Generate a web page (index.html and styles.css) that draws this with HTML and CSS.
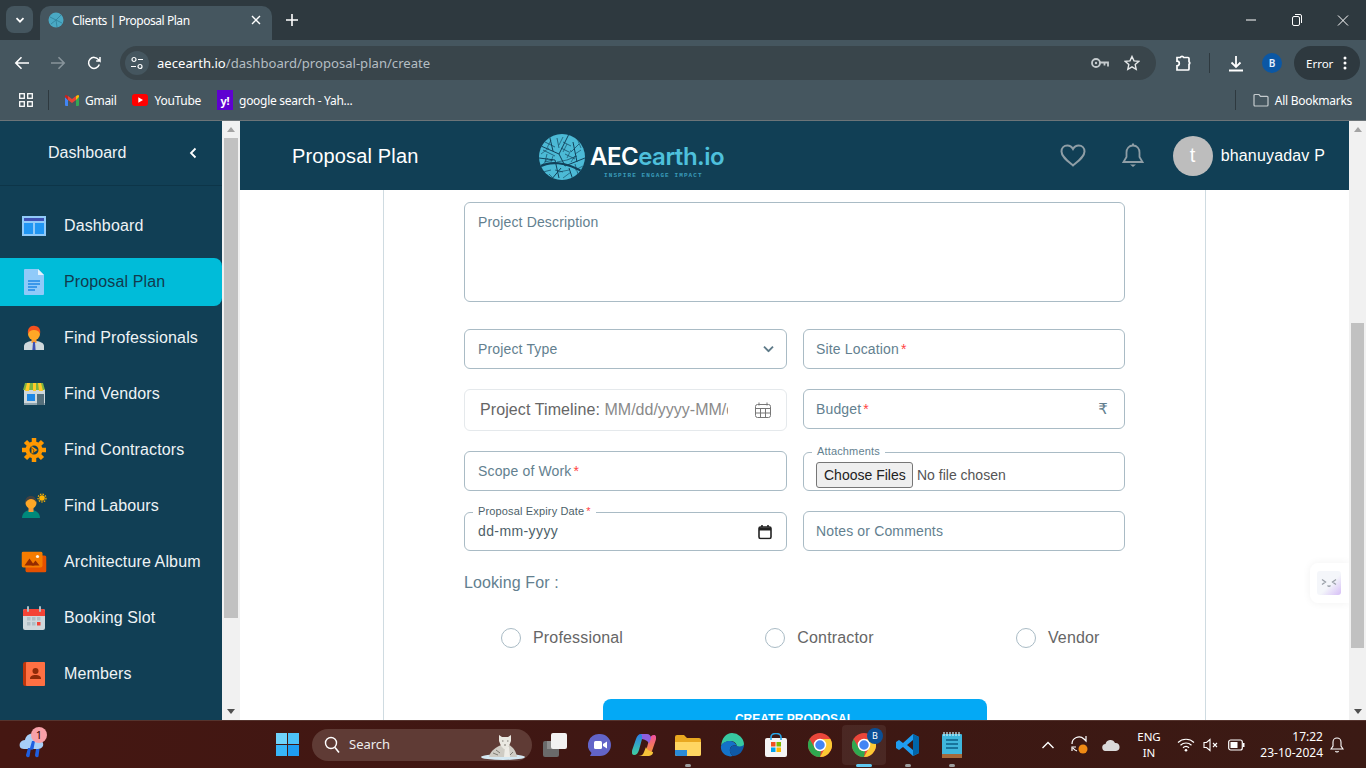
FILE: index.html
```html
<!DOCTYPE html>
<html>
<head>
    <title>Clients | Proposal Plan</title>
    <link rel="stylesheet" href="styles.css">
</head>
<body>
    <!-- Browser chrome -->
    <div class="tabbar">
        <div class="tab-search"><svg width="12" height="12" viewBox="0 0 12 12"><path d="M2.5 4.2 6 7.7l3.5-3.5" fill="none" stroke="#fff" stroke-width="1.7"/></svg></div>
        <div class="tab">
            <svg class="favicon" width="16" height="16" viewBox="0 0 16 16"><circle cx="8" cy="8" r="7.5" fill="#4aa9c4"/><path d="M2 5l6 3 5-5M3 12l5-4 1 7M8 8l6 3" stroke="#2f7f99" fill="none" stroke-width=".8"/></svg>
            <span class="tab-title">Clients | Proposal Plan</span>
            <svg class="tab-close" width="10" height="10" viewBox="0 0 10 10"><path d="M1 1l8 8M9 1L1 9" stroke="#fff" stroke-width="1.4"/></svg>
        </div>
        <svg class="tab-new" width="12" height="12" viewBox="0 0 12 12"><path d="M6 0v12M0 6h12" stroke="#fff" stroke-width="1.6"/></svg>
        <div class="win-controls">
            <svg width="10" height="10" viewBox="0 0 10 10"><path d="M0 5h10" stroke="#fff"/></svg>
            <svg width="10" height="12" viewBox="0 0 10 12"><rect x=".5" y="2.5" width="7" height="9" rx="1.5" fill="none" stroke="#fff"/><path d="M3 .5h5a1.500 1.500 0 0 1 1.500 1.500v7" fill="none" stroke="#fff"/></svg>
            <svg width="11" height="11" viewBox="0 0 11 11"><path d="M.5.5l10 10M10.500.5l-10 10" stroke="#fff"/></svg>
        </div>
    </div>

    <div class="toolbar">
        <svg class="tool-back" width="16" height="14" viewBox="0 0 16 14"><path d="M15 7H2M7.500 1.200 1.800 7l5.700 5.800" fill="none" stroke="#fff" stroke-width="1.600"/></svg>
        <svg class="tool-forward" width="16" height="14" viewBox="0 0 16 14"><path d="M1 7h13M8.500 1.200 14.200 7l-5.700 5.800" fill="none" stroke="#88949b" stroke-width="1.600"/></svg>
        <svg class="tool-reload" width="14" height="14" viewBox="0 0 14 14"><path d="M12.300 8.600a5.500 5.500 0 1 1-.8-5L13 5V1M13 5H9.200" fill="none" stroke="#fff" stroke-width="1.500"/></svg>
        <div class="omnibox">
            <div class="site-info"><svg width="14" height="14" viewBox="0 0 14 14"><circle cx="4" cy="3.500" r="2" fill="none" stroke="#fff" stroke-width="1.200"/><path d="M8 3.500h5M1 10.500h5" stroke="#fff" stroke-width="1.200"/><circle cx="10" cy="10.500" r="2" fill="none" stroke="#fff" stroke-width="1.200"/></svg></div>
            <div class="url"><span class="url-host">aecearth.io</span>/dashboard/proposal-plan/create</div>
            <svg class="omni-key" width="18" height="12" viewBox="0 0 18 12"><circle cx="5" cy="6" r="4" fill="none" stroke="#c5cbce" stroke-width="1.800"/><circle cx="5" cy="6" r="1.200" fill="#c5cbce"/><path d="M9 5.500h8v4M13.500 5.500v3" fill="none" stroke="#c5cbce" stroke-width="1.800"/></svg>
            <svg class="omni-star" width="16" height="16" viewBox="0 0 16 16"><path d="M8 1.500l2 4.400 4.700.5-3.500 3.200 1 4.700L8 11.900l-4.200 2.400 1-4.700L1.300 6.400 6 5.900z" fill="none" stroke="#e6e9ea" stroke-width="1.400"/></svg>
        </div>
        <svg class="tool-ext" width="18" height="18" viewBox="0 0 18 18"><path d="M3 3.500h3.200a2 2 0 0 1 3.600 0H14a1 1 0 0 1 1 1v3.200a1.500 1.500 0 0 1 0 2.600V15a1 1 0 0 1-1 1H3v-4.200a2.300 2.300 0 0 0 0-4.600z" fill="none" stroke="#fff" stroke-width="1.700"/></svg>
        <span class="tool-divider"></span>
        <svg class="tool-download" width="16" height="17" viewBox="0 0 16 17"><path d="M8 1v11M3.500 7.500 8 12l4.500-4.500M1 15.500h14" fill="none" stroke="#fff" stroke-width="1.800"/></svg>
        <span class="tool-profile">B</span>
        <div class="tool-error">Error<svg width="4" height="14" viewBox="0 0 4 14"><circle cx="2" cy="2" r="1.500" fill="#fff"/><circle cx="2" cy="7" r="1.500" fill="#fff"/><circle cx="2" cy="12" r="1.500" fill="#fff"/></svg></div>
    </div>

    <div class="bookmarks">
        <svg class="mark-apps" width="14" height="14" viewBox="0 0 14 14"><g fill="none" stroke="#fff" stroke-width="1.300"><rect x=".7" y=".7" width="4.600" height="4.600"/><rect x="8.700" y=".7" width="4.600" height="4.600"/><rect x=".7" y="8.700" width="4.600" height="4.600"/><rect x="8.700" y="8.700" width="4.600" height="4.600"/></g></svg>
        <span class="mark-divider"></span>
        <div class="mark mark-gmail"><svg width="14" height="11" viewBox="0 0 14 11"><path d="M0 2v8a1 1 0 0 0 1 1h2V5z" fill="#4285f4"/><path d="M14 2v8a1 1 0 0 1-1 1h-2V5z" fill="#34a853"/><path d="M0 2l3 3v-4L1.500.2C.8-.2 0 .5 0 1.300z" fill="#c5221f"/><path d="M14 2l-3 3v-4l1.500-.8c.7-.4 1.500.3 1.500 1.100z" fill="#fbbc04"/><path d="M3 1v4l4 3 4-3V1L7 4z" fill="#ea4335"/></svg>Gmail</div>
        <div class="mark mark-youtube"><svg width="16" height="12" viewBox="0 0 16 12"><rect width="16" height="12" rx="3" fill="#f00"/><path d="M6.300 3.300v5.400L11 6z" fill="#fff"/></svg>YouTube</div>
        <div class="mark mark-yahoo"><span class="yahoo-icon">y!</span>google search - Yah...</div>
        <span class="mark-divider mark-divider-end"></span>
        <div class="mark mark-all"><svg width="16" height="14" viewBox="0 0 16 14"><path d="M1 2.500a1 1 0 0 1 1-1h4l1.500 1.800H14a1 1 0 0 1 1 1V12a1 1 0 0 1-1 1H2a1 1 0 0 1-1-1z" fill="none" stroke="#c5cbce" stroke-width="1.200"/></svg>All Bookmarks</div>
    </div>

    <!-- App -->
    <div class="app">
        <aside class="sidebar">
            <div class="side-head">
                <span>Dashboard</span>
                <svg width="10" height="12" viewBox="0 0 10 12"><path d="M7.500 1.500 3 6l4.500 4.500" fill="none" stroke="#fff" stroke-width="1.800"/></svg>
            </div>
            <nav class="side-nav">
                <a class="side-item">
                    <svg width="24" height="24" viewBox="0 0 24 24"><rect y="2" width="24" height="20" fill="#90caf9"/><rect x="2" y="4" width="20" height="3" fill="#3f51b5"/><rect x="2" y="9" width="9" height="11" fill="#2196f3"/><rect x="13" y="9" width="9" height="11" fill="#2196f3"/></svg>
                    Dashboard</a>
                <a class="side-item active">
                    <svg width="24" height="26" viewBox="0 0 24 26"><path d="M3 0h13l6 6v19a1 1 0 0 1-1 1H3a1 1 0 0 1-1-1V1a1 1 0 0 1 1-1z" fill="#90caf9"/><path d="M16 0l6 6h-6z" fill="#e3f2fd"/><path d="M6 12h12M6 15h12M6 18h9M6 21h7" stroke="#1e88e5" stroke-width="1.500"/></svg>
                    Proposal Plan</a>
                <a class="side-item">
                    <svg width="24" height="26" viewBox="0 0 24 26"><path d="M2 25v-4c0-3 4-5 10-5s10 2 10 5v4z" fill="#cfd8dc"/><rect x="9.500" y="12" width="5" height="6" fill="#f59b3b"/><circle cx="12" cy="9" r="6" fill="#ffa726"/><path d="M6 9C5 3 9 0 13 1c4 0 6 4 5 8-1-3-3-4-6-4-3 0-5 1-6 4z" fill="#f4511e"/><path d="M11 17h2l.6 8h-3.200z" fill="#3f51b5"/></svg>
                    Find Professionals</a>
                <a class="side-item">
                    <svg width="24" height="24" viewBox="0 0 24 24"><rect x="2" y="7" width="21" height="16" fill="#cfd8dc"/><rect x="2" y="21" width="21" height="2" fill="#90a4ae"/><rect x="5" y="12" width="8" height="7" fill="#1e88e5"/><rect x="15" y="12" width="7" height="11" fill="#546e7a"/><path d="M3 1h18l2 7H1z" fill="#7cb342"/><path d="M5 1h3L7 9H3zM11 1h3v8h-3zM16 1h3l2 8h-4z" fill="#ffca28"/></svg>
                    Find Vendors</a>
                <a class="side-item">
                    <svg width="24" height="24" viewBox="0 0 24 24"><path d="M12 5.500a6.500 6.500 0 1 1 0 13 6.500 6.500 0 0 1 0-13z" fill="none" stroke="#ff9800" stroke-width="4"/><g stroke="#ff9800" stroke-width="4.500"><path d="M12 0v4M12 20v4M0 12h4M20 12h4M3.500 3.500l3 3M17.500 17.500l3 3M3.500 20.500l3-3M17.500 6.500l3-3"/></g><path d="M9.500 8l6 4-6 4z" fill="#ff9800"/><path d="M12 12L8 9M12 12l-1 4" stroke="#8d5300" stroke-width="1"/></svg>
                    Find Contractors</a>
                <a class="side-item">
                    <svg width="26" height="26" viewBox="0 0 26 26"><path d="M1 25c0-5 4-8 9-8s9 3 9 8z" fill="#00897b"/><rect x="7.500" y="13" width="5" height="6" fill="#f59b3b"/><circle cx="10" cy="10" r="5.500" fill="#ffa726"/><path d="M4.500 10c-1-5 3-7.500 6-7 3 0 5 3 4.500 6-1-2-3-3-5-3-2 0-4 1-5.500 4z" fill="#424242"/><circle cx="21" cy="5" r="2.800" fill="#ffb300"/><circle cx="21" cy="5" r="4" fill="none" stroke="#ffb300" stroke-width="1.200" stroke-dasharray="1.500 1.200"/></svg>
                    Find Labours</a>
                <a class="side-item">
                    <svg width="25" height="21" viewBox="0 0 25 21"><rect x="4" y="4" width="21" height="17" rx="2" fill="#e65100"/><rect width="21" height="16" rx="2" fill="#f57c00"/><path d="M3 14l5-7 5 7z" fill="#942b00"/><path d="M10 14l4-5 4 5z" fill="#942b00"/><circle cx="16" cy="5" r="1.600" fill="#fff3e0"/></svg>
                    Architecture Album</a>
                <a class="side-item">
                    <svg width="24" height="24" viewBox="0 0 24 24"><rect x="1" y="3" width="22" height="21" rx="2" fill="#cfd8dc"/><path d="M1 10V5a2 2 0 0 1 2-2h18a2 2 0 0 1 2 2v5z" fill="#f44336"/><rect x="5" y="0" width="2" height="6" rx="1" fill="#b0bec5"/><rect x="17" y="0" width="2" height="6" rx="1" fill="#b0bec5"/><g fill="#b0bec5"><rect x="5" y="11" width="3.500" height="3.500"/><rect x="10" y="11" width="3.500" height="3.500"/><rect x="15" y="11" width="3.500" height="3.500"/><rect x="5" y="16" width="3.500" height="3.500"/><rect x="10" y="16" width="3.500" height="3.500"/></g><rect x="15" y="16" width="3.500" height="3.500" fill="#f44336"/></svg>
                    Booking Slot</a>
                <a class="side-item">
                    <svg width="22" height="24" viewBox="0 0 22 24"><rect width="22" height="24" rx="2" fill="#bf360c"/><rect x="3" width="19" height="24" rx="1" fill="#ff7043"/><circle cx="12.500" cy="9" r="3" fill="#8f2a08"/><path d="M7 17c0-3 2-4 5.500-4s5.500 1 5.500 4z" fill="#8f2a08"/></svg>
                    Members</a>
            </nav>
        </aside>
        <div class="scrollbar scrollbar-side"><span class="sb-up"></span><span class="sb-thumb"></span><span class="sb-down"></span></div>

        <main class="main">
            <header class="top-bar">
                <h1 class="page-title">Proposal Plan</h1>
                <div class="logo">
                    <svg width="46" height="46" viewBox="0 0 46 46">
                        <defs><clipPath id="globe"><circle cx="23" cy="23" r="23"/></clipPath></defs>
                        <circle cx="23" cy="23" r="23" fill="#4cbad6"/>
                        <g clip-path="url(#globe)" fill="none" stroke="#12415a">
                            <path d="M0 33c10-6 26-6 46 6" stroke-width="2.200"/>
                            <path d="M2 12l18 8 6 12M20 20L30 0M26 32l20-8M10 0l4 17M0 24l16 2 4 18M34 8l4 20M12 46l10-12M30 34l4 12" stroke-width="1"/>
                            <path d="M4 16l12 6M6 8l10 5M24 8l8 4M22 14l8 4M26 20l10 5M28 26l10-4M6 28l8-2M8 20l-2 8M36 30l4 14M18 4l2 10M40 10l-8 8M16 36l8 2M4 38l8-2" stroke-width=".7"/>
                            <path d="M2 20l8-6M12 6l-4 8M14 22l-2 6M3 32l6-8M24 3l-4 8M28 10l-4 8M32 16l-4 8M36 22l-4 6M42 16l-6 4M38 4l4 10M18 28l10-2M20 38l10-2M24 44l8-6M36 36l8-4M10 40l4 4" stroke-width=".6"/>
                        </g>
                    </svg>
                    <div class="logo-text">
                        <div class="logo-name">AEC<span>earth.io</span></div>
                        <div class="logo-tag">INSPIRE ENGAGE IMPACT</div>
                    </div>
                </div>
                <div class="top-actions">
                    <svg class="top-heart" width="26" height="23" viewBox="0 0 26 23"><path d="M13 21.500C7 16.500 1.500 12.500 1.500 7.500 1.500 4 4 1.500 7.300 1.500c2.400 0 4.500 1.300 5.700 3.500 1.200-2.200 3.300-3.500 5.700-3.500 3.300 0 5.800 2.500 5.800 6 0 5-5.500 9-11.500 14z" fill="none" stroke="#8f9ea6" stroke-width="2"/></svg>
                    <svg class="top-bell" width="22" height="25" viewBox="0 0 22 25"><path d="M11 2.500c-4 0-6.500 3-6.500 7v4.500L1.500 19h19l-3-5V9.500c0-4-2.500-7-6.500-7z" fill="none" stroke="#8f9ea6" stroke-width="1.800"/><path d="M11 .5v2" stroke="#8f9ea6" stroke-width="2"/><path d="M8 21.500h6l-3 2.500z" fill="#8f9ea6"/></svg>
                    <span class="avatar">t</span>
                    <span class="user-name">bhanuyadav P</span>
                </div>
            </header>

            <div class="content">
                <form class="card">
                    <div class="field field-area">Project Description</div>
                    <div class="form-grid">
                        <div class="field">Project Type
                            <svg class="field-icon icon-chevron" width="11" height="7" viewBox="0 0 11 7"><path d="M1 1.200l4.500 4.500L10 1.200" fill="none" stroke="#5e7a88" stroke-width="1.900"/></svg>
                        </div>
                        <div class="field">Site Location<span class="req">*</span></div>
                        <div class="field field-timeline">
                            <span class="timeline-label">Project Timeline:&nbsp;</span><span class="timeline-value">MM/dd/yyyy-MM/dd/yyyy</span>
                            <svg class="field-icon" width="16" height="16" viewBox="0 0 16 16"><g fill="none" stroke="#777" stroke-width="1"><rect x=".5" y="2.500" width="15" height="13" rx="2"/><path d="M4 .5v3M12 .5v3M.5 6.500h15M5.500 6.500v9M10.500 6.500v9M.5 11h15"/></g></svg>
                        </div>
                        <div class="field">Budget<span class="req">*</span><span class="field-icon rupee">₹</span></div>
                        <div class="field">Scope of Work<span class="req">*</span></div>
                        <div class="field field-float">
                            <span class="float-label">Attachments</span>
                            <input class="file-input" type="file" multiple>
                        </div>
                        <div class="field field-float field-date">
                            <span class="float-label">Proposal Expiry Date<span class="req">*</span></span>
                            dd-mm-yyyy
                            <svg class="field-icon icon-date" width="14" height="15" viewBox="0 0 14 15"><rect x="1" y="2.500" width="12" height="11.500" rx="1.500" fill="none" stroke="#222" stroke-width="1.600"/><path d="M1 4.500h12" stroke="#222" stroke-width="3"/><path d="M4 .5v2M10 .5v2" stroke="#222" stroke-width="1.600"/></svg>
                        </div>
                        <div class="field">Notes or Comments</div>
                    </div>
                    <div class="looking-title">Looking For :</div>
                    <div class="looking-row">
                        <label class="radio"><span class="radio-dot"></span>Professional</label>
                        <label class="radio"><span class="radio-dot"></span>Contractor</label>
                        <label class="radio"><span class="radio-dot"></span>Vendor</label>
                    </div>
                    <button class="create-btn" type="button">CREATE PROPOSAL</button>
                </form>
            </div>

            <div class="float-widget">
                <div class="float-widget-icon"><svg width="16" height="10" viewBox="0 0 16 10"><path d="M1 1.500l3.500 2.500L1 6.500M15 1.500L11.500 4 15 6.500M6.500 7.500q1.500 1.500 3 0" fill="none" stroke="#9aa0a8" stroke-width="1.300"/></svg></div>
            </div>
        </main>
        <div class="scrollbar scrollbar-main"><span class="sb-up"></span><span class="sb-track"></span><span class="sb-thumb"></span><span class="sb-down"></span></div>
    </div>

    <!-- Windows taskbar -->
    <footer class="taskbar">
        <div class="task-weather">
            <svg width="26" height="28" viewBox="0 0 26 28"><path d="M5 18c-4 0-5-3-4-6 1-2 3-3 5-3 1-5 5-7 8-6 3 0 5 3 5 6 4 0 6 3 5 6-1 2-3 3-5 3z" fill="#a8cff7"/><path d="M9 17l-2 7a2 2 0 0 0 3.500 1.500L12 17zM13 10l-2 7a2 2 0 0 0 3.500 1L16 10zM17 18l-1 6a2 2 0 0 0 3.500 1.500l1-7.500z" fill="#1f5fe0"/></svg>
            <span class="weather-badge">1</span>
        </div>
        <div class="task-slot task-start">
            <svg width="23" height="23" viewBox="0 0 23 23"><rect width="11" height="11" fill="#6fd3fb"/><rect x="12" width="11" height="11" fill="#4cc2f9"/><rect y="12" width="11" height="11" fill="#38b5f8"/><rect x="12" y="12" width="11" height="11" fill="#1e9df2"/></svg>
        </div>
        <div class="task-search">
            <svg width="16" height="18" viewBox="0 0 16 18"><circle cx="7" cy="7" r="5.500" fill="none" stroke="#fff" stroke-width="1.400"/><path d="M11 11.500l4 5" stroke="#fff" stroke-width="1.600"/></svg>
            <span>Search</span>
            <svg class="search-tiger" width="44" height="26" viewBox="0 0 44 26"><ellipse cx="22" cy="23" rx="22" ry="3" fill="#d5e8f2"/><path d="M8 23c1-6 8-11 13-12h7c4 2 7 6 8 12z" fill="#cfccc4"/><path d="M24 13h4l1 10h-6z" fill="#eeece6"/><path d="M18 1l3 2h6l3-2 0 6-2 5-3 3h-2l-3-3-2-5z" fill="#ebe9e2"/><path d="M21 7h1.500M26 7h1.500M24 10v2M12 19l5 2M15 16l4 3M32 18l-3 3" stroke="#7f7d75" stroke-width="1"/></svg>
        </div>
        <div class="task-slot"><svg width="26" height="24" viewBox="0 0 26 24"><rect y="8" width="16" height="16" rx="2" fill="#6a6a6a"/><rect x="4" y="8" width="12" height="8" fill="#8c8c8c"/><rect x="8" width="16" height="16" rx="2" fill="#f2f2f2"/></svg></div>
        <div class="task-slot"><svg width="24" height="24" viewBox="0 0 24 24"><path d="M12 1a11 11 0 0 1 0 22H2l1.500-3A11 11 0 0 1 12 1z" fill="#6264c8"/><rect x="6" y="8" width="8" height="8" rx="1.500" fill="#fff"/><path d="M15 11l4-2.500v7L15 13z" fill="#fff"/></svg></div>
        <div class="task-slot"><svg width="24" height="24" viewBox="0 0 24 24"><defs><linearGradient id="cop-a" x1="0" y1="0" x2="0" y2="1"><stop offset="0" stop-color="#2a7fe8"/><stop offset="1" stop-color="#3fd0a0"/></linearGradient><linearGradient id="cop-b" x1="0" y1="0" x2="0" y2="1"><stop offset="0" stop-color="#f04fa0"/><stop offset="1" stop-color="#f6a020"/></linearGradient></defs><path d="M9 1h6c-3 0-4 2-5 5L7 17c-.8 3-2.500 5-5 5-2 0-2.500-2-1.800-5L4 6c1-3 2.500-5 5-5z" fill="url(#cop-a)"/><path d="M15 23H9c3 0 4-2 5-5l3-11c.8-3 2.500-5 5-5 2 0 2.500 2 1.800 5L20 18c-1 3-2.500 5-5 5z" fill="url(#cop-b)"/><path d="M9 1h6c2.500 0 4 2 4 4l-2 6c-1-3-3-4-7-5 0-2 .5-4-1-5z" fill="#8e5fe0"/><path d="M6 23c3 0 5-1 6-4l2-5c1 3 3 4 7 5 0 2-1 4-6 4z" fill="#f6c33a"/></svg></div>
        <div class="task-slot task-dot"><svg width="26" height="22" viewBox="0 0 26 22"><path d="M0 3a2 2 0 0 1 2-2h7l3 3h12a2 2 0 0 1 2 2v14a2 2 0 0 1-2 2H2a2 2 0 0 1-2-2z" fill="#e9a820"/><path d="M0 8h26v12a2 2 0 0 1-2 2H2a2 2 0 0 1-2-2z" fill="#ffd662"/><path d="M0 16h12v6H2a2 2 0 0 1-2-2z" fill="#2a8bd8"/></svg></div>
        <div class="task-slot"><svg width="24" height="24" viewBox="0 0 24 24"><path d="M12 0a12 12 0 0 1 12 11c0 4-4 5-7 4 0-5-3-7-6-7-4 0-9 2-10 5C2 5 6 0 12 0z" fill="#37c9a0"/><path d="M1 13c1-3 5-5 9-5 3 0 6 2 7 5-1-1-3-1-5 0-3 2-3 7 1 10-7 2-13-4-12-10z" fill="#1472c8"/><path d="M12 13c2-1 4-1 5 0 3 1 7 0 7-2 0 7-5 12-11 12-4-3-4-8-1-10z" fill="#0f5aa8"/></svg></div>
        <div class="task-slot"><svg width="22" height="24" viewBox="0 0 22 24"><rect y="5" width="22" height="19" rx="2" fill="#f5f5f5"/><path d="M6 7V4a5 3.500 0 0 1 10 0v3" fill="none" stroke="#28a8ea" stroke-width="1.600"/><rect x="6" y="9" width="4.500" height="4.500" fill="#f25022"/><rect x="11.500" y="9" width="4.500" height="4.500" fill="#7fba00"/><rect x="6" y="14.500" width="4.500" height="4.500" fill="#00a4ef"/><rect x="11.500" y="14.500" width="4.500" height="4.500" fill="#ffb900"/></svg></div>
        <div class="task-slot"><svg width="24" height="24" viewBox="0 0 24 24"><circle cx="12" cy="12" r="12" fill="#e9463a"/><path d="M12 24A12 12 0 0 1 1.600 6L7 15.500a6 6 0 0 0 6 2.500z" fill="#2fa84f"/><path d="M12 24a12 12 0 0 0 10.400-18H12a6 6 0 0 1 5 9z" fill="#fcc934"/><circle cx="12" cy="12" r="5.500" fill="#4285f4" stroke="#fff" stroke-width="1.500"/></svg></div>
        <div class="task-slot task-active"><svg width="24" height="24" viewBox="0 0 24 24"><circle cx="12" cy="12" r="12" fill="#e9463a"/><path d="M12 24A12 12 0 0 1 1.600 6L7 15.500a6 6 0 0 0 6 2.500z" fill="#2fa84f"/><path d="M12 24a12 12 0 0 0 10.400-18H12a6 6 0 0 1 5 9z" fill="#fcc934"/><circle cx="12" cy="12" r="5.500" fill="#4285f4" stroke="#fff" stroke-width="1.500"/></svg><span class="chrome-badge">B</span></div>
        <div class="task-slot task-dot"><svg width="24" height="24" viewBox="0 0 24 24"><path d="M17 1l6 3v16l-6 3L7 14l-4 3-3-2V9l3-2 4 3zM17 7l-6 5 6 5z" fill="#1f9cf0"/><path d="M17 1l6 3v16l-6 3z" fill="#0065a9"/></svg></div>
        <div class="task-slot task-dot"><svg width="20" height="26" viewBox="0 0 20 26"><rect y="2" width="20" height="24" rx="1" fill="#3fb6dc"/><rect y="22" width="20" height="4" fill="#a5693a"/><path d="M4 8h12M4 12h12M4 16h12" stroke="#0d5f86" stroke-width="1.600"/><path d="M2 0v4M5 0v4M8 0v4M11 0v4M14 0v4M17 0v4" stroke="#cdeef8" stroke-width="1.200"/></svg></div>

        <div class="tray">
            <div class="tray-slot tray-chevron"><svg width="14" height="8" viewBox="0 0 14 8"><path d="M1.500 7L7 1.500 12.500 7" fill="none" stroke="#fff" stroke-width="1.400"/></svg></div>
            <div class="tray-slot tray-sync"><svg width="20" height="22" viewBox="0 0 20 22"><path d="M2 10a7 7 0 0 1 12-5l2 2V2M2 17v-4h4M3 14a7 7 0 0 0 4 3" fill="none" stroke="#fff" stroke-width="1.200"/><circle cx="13" cy="15" r="4.500" fill="#f08a14"/></svg></div>
            <div class="tray-slot tray-cloud"><svg width="18" height="12" viewBox="0 0 18 12"><path d="M4 12a3.500 3.500 0 0 1-.5-7 5 5 0 0 1 9.500-1 4 4 0 0 1 1 8z" fill="#d9d9d9"/></svg></div>
            <div class="tray-lang"><span>ENG</span><span>IN</span></div>
            <div class="tray-slot tray-wifi"><svg width="18" height="14" viewBox="0 0 18 14"><path d="M1 4.500a11.500 11.500 0 0 1 16 0M3.500 7.200a8 8 0 0 1 11 0M6 9.800a4.400 4.400 0 0 1 6 0" fill="none" stroke="#fff" stroke-width="1.200"/><circle cx="9" cy="12.300" r="1.300" fill="#fff"/></svg></div>
            <div class="tray-slot tray-mute"><svg width="16" height="14" viewBox="0 0 16 14"><path d="M1 4.500h2.500L7 1.500v11l-3.500-3H1z" fill="none" stroke="#fff" stroke-width="1.100"/><path d="M10 5l4 4M14 5l-4 4" stroke="#fff" stroke-width="1.100"/></svg></div>
            <div class="tray-slot tray-battery"><svg width="17" height="12" viewBox="0 0 17 12"><rect x=".7" y="1" width="13.600" height="10" rx="2" fill="none" stroke="#fff" stroke-width="1.200"/><rect x="2.500" y="3" width="7" height="6" fill="#fff"/><rect x="15" y="4" width="1.500" height="4" fill="#fff"/></svg></div>
            <div class="tray-clock"><span>17:22</span><span>23-10-2024</span></div>
            <div class="tray-slot tray-bell"><svg width="14" height="16" viewBox="0 0 14 16"><path d="M7 1a4 4 0 0 0-4 4v4l-2 3h12l-2-3V5a4 4 0 0 0-4-4zM5.500 14a1.600 1.600 0 0 0 3 0" fill="none" stroke="#fff" stroke-width="1.100"/></svg></div>
        </div>
    </footer>
</body>
</html>
```

FILE: styles.css
```css
* { box-sizing: border-box; }
html, body { margin: 0; height: 768px; overflow: hidden; }
body { width: 1366px; font-family: "Liberation Sans", Arial, sans-serif; background: #fff; display: flex; flex-direction: column; }

/* browser chrome */
.tabbar { height: 40px; background: #2e393f; display: flex; align-items: flex-end; position: relative; font-family: "Noto Sans", sans-serif; }
.tab-search { width: 27px; height: 27px; margin: 0 7px 7px 6px; background: #45565f; border-radius: 8px; display: flex; align-items: center; justify-content: center; }
.tab { width: 232px; height: 34px; background: #45565f; border-radius: 10px 10px 0 0; display: flex; align-items: center; padding: 0 11px 6px 8px; color: #fff; font-size: 12px; }
.favicon { margin-right: 8px; }
.tab-title { flex: 1; letter-spacing: -.45px; }
.tab-new { margin: 0 0 14px 14px; }
.win-controls { margin-left: auto; display: flex; align-items: center; height: 40px; }
.win-controls svg { width: 46px; }
.toolbar { height: 46px; background: #45565f; display: flex; align-items: center; font-family: "Noto Sans", sans-serif; }
.tool-back { margin-left: 14px; }
.tool-forward { margin-left: 20px; }
.tool-reload { margin-left: 21px; }
.omnibox { width: 1036px; height: 34px; margin-left: 19px; background: #39454b; border-radius: 17px; display: flex; align-items: center; padding: 0 16px 0 5px; }
.site-info { width: 24px; height: 24px; border-radius: 50%; background: #45565f; display: flex; align-items: center; justify-content: center; }
.url { margin-left: 8px; flex: 1; font-size: 13.100px; color: #b5bec3; }
.url-host { color: #fff; }
.omni-key { margin-right: 15px; }
.tool-ext { margin-left: 18px; }
.tool-divider { width: 1px; height: 20px; background: #2e393f; margin: 0 18px 0 17px; }
.tool-profile { width: 20px; height: 20px; margin-left: 18px; border-radius: 50%; background: #0b57a4; color: #e8f0fe; font-size: 10px; font-weight: 600; display: flex; align-items: center; justify-content: center; }
.tool-error { width: 66px; height: 34px; margin-left: 12px; background: #2e393f; border-radius: 17px; color: #fff; font-size: 11.500px; display: flex; align-items: center; justify-content: space-between; padding: 0 13px 0 12px; }
.bookmarks { height: 35px; padding-bottom: 6px; background: #45565f; display: flex; align-items: center; color: #fff; font-size: 12px; font-family: "Noto Sans", sans-serif; border-bottom: 1px solid #6c7478; }
.mark-apps { margin-left: 19px; }
.mark-divider { width: 1px; height: 20px; background: #2e393f; margin-left: 15px; }
.mark { display: flex; align-items: center; gap: 6px; white-space: nowrap; letter-spacing: -.28px; }
.mark-gmail { margin-left: 16px; }
.mark-youtube { margin-left: 16px; }
.mark-yahoo { margin-left: 16px; }
.yahoo-icon { width: 16px; height: 20px; background: #5f01d1; color: #fff; font-size: 11px; font-weight: 700; display: flex; align-items: center; justify-content: center; }
.mark-divider-end { margin-left: auto; }
.mark-all { margin: 0 14px 0 17px; }

/* app */
.app { height: 599px; display: flex; }
.sidebar { width: 222px; background: #113f55; color: #eef3f5; font-size: 16px; flex-shrink: 0; }
.side-head { height: 65px; border-bottom: 1px solid #0d3548; display: flex; align-items: center; justify-content: space-between; padding: 0 24px 0 48px; }
.side-nav { padding-top: 16px; display: flex; flex-direction: column; gap: 8px; }
.side-item { height: 48px; display: flex; align-items: center; position: relative; padding-left: 64px; letter-spacing: .13px; }
.side-item svg { position: absolute; left: 34px; top: 24px; transform: translate(-50%, -50%); }
.side-item.active { background: #00bcd9; border-radius: 0 8px 8px 0; color: #123a4e; }

.scrollbar { background: #f1f1f1; flex-shrink: 0; position: relative; }
.scrollbar-side { width: 18px; }
.scrollbar-main { width: 17px; }
.sb-up, .sb-down { position: absolute; left: 50%; margin-left: -4px; border: 4px solid transparent; }
.sb-up { top: 2px; border-bottom: 5px solid #a3a3a3; }
.sb-down { bottom: 2px; border-top: 5px solid #505050; }
.sb-thumb { position: absolute; left: 2px; right: 2px; background: #c1c1c1; }
.scrollbar-side .sb-thumb { top: 17px; height: 480px; }
.scrollbar-main .sb-thumb { top: 202px; height: 325px; }

.main { flex: 1; display: flex; flex-direction: column; position: relative; overflow: hidden; }
.top-bar { height: 69px; background: #113f55; color: #fff; display: flex; align-items: center; padding-left: 52px; flex-shrink: 0; }
.page-title { width: 247px; margin: 2px 0 0; font-size: 20px; font-weight: 400; letter-spacing: .15px; }
.logo { display: flex; align-items: center; gap: 5px; margin-top: 2px; }
.logo-text { margin-top: 10px; }
.logo-name { font-family: Inter, sans-serif; font-weight: 600; font-size: 24px; letter-spacing: -.5px; line-height: 28px; color: #fff; }
.logo-name span { color: #4ec0dc; }
.logo-tag { margin-top: 1px; padding-left: 14px; font-family: "Liberation Mono", monospace; font-size: 6px; font-weight: 700; letter-spacing: 1.100px; color: #3a9dbb; line-height: 8px; }
.top-actions { margin-left: auto; display: flex; align-items: center; padding-right: 24px; }
.top-bell { margin-left: 36px; }
.avatar { width: 40px; height: 40px; margin-left: 29px; border-radius: 50%; background: #bdbdbd; color: #fff; font-size: 20px; display: flex; align-items: center; justify-content: center; }
.user-name { margin-left: 8px; font-size: 16px; letter-spacing: .17px; }

.content { flex: 1; overflow: hidden; }
.card { width: 823px; height: 100%; margin-left: 143px; border-left: 1px solid #cfdbe1; border-right: 1px solid #cfdbe1; padding: 12px 80px 0; }
.field { height: 40px; border: 1px solid #a9bbc5; border-radius: 6px; display: flex; align-items: center; padding: 0 13px; font-size: 14px; letter-spacing: .15px; color: #637f8f; position: relative; white-space: nowrap; }
.field-area { height: 100px; align-items: flex-start; padding-top: 11px; margin-bottom: 27px; }
.form-grid { display: grid; grid-template-columns: 323px 322px; gap: 20px 16px; align-items: start; }
.form-grid .field:nth-child(even) { padding-left: 12px; }
.req { color: #f44; margin-left: 2px; }
.field-icon { position: absolute; right: 15px; top: 50%; transform: translateY(-50%); }
.icon-chevron { right: 12px; }
.icon-date { right: 14px; top: 19px; }
.rupee { font-family: "DejaVu Sans", sans-serif; font-size: 15px; right: 16px; }
.field-timeline { height: 42px; border-color: #e5e9ec; padding: 0 15px; font-size: 16px; letter-spacing: .1px; }
.timeline-label { color: #666; }
.timeline-value { color: #8a8a8a; width: 123px; overflow: hidden; letter-spacing: 0; }
.field-float { margin-top: 1px; height: 39px; }
.float-label { position: absolute; left: 8px; top: -8px; background: #fff; padding: 0 5px; font-size: 11px; line-height: 13px; letter-spacing: .15px; }
.field-date { height: 39px; padding-bottom: 2px; color: #4d5f69; letter-spacing: .4px; }
.file-input { font-family: "Liberation Sans", Arial, sans-serif; font-size: 14px; color: #555; margin-top: 7px; letter-spacing: 0; }
.file-input::file-selector-button { font: inherit; color: #222; padding: 3px 7px; height: 26px; width: 97px; margin-right: 4px; background: #efefef; border: 1px solid #767676; border-radius: 3px; }
.looking-title { margin-top: 23px; font-size: 16px; line-height: 18px; color: #637f8f; letter-spacing: .1px; }
.looking-row { display: flex; gap: 142.200px; padding-left: 37px; margin-top: 36px; }
.radio { display: flex; align-items: center; gap: 12px; font-size: 16px; color: #666; line-height: 20px; letter-spacing: .17px; }
.radio-dot { width: 20px; height: 20px; border: 1px solid #a9bbc5; border-radius: 50%; }
.create-btn { display: block; width: 384px; height: 40px; margin: 51px auto 0; background: #04a9f5; border: none; border-radius: 8px; color: #fff; font-family: "Liberation Sans", Arial, sans-serif; font-size: 12px; font-weight: 700; }
.float-widget { position: absolute; right: 0; top: 442px; width: 39px; height: 40px; background: #fff; border-radius: 8px 0 0 8px; box-shadow: 0 0 8px rgba(0, 0, 0, .06); padding: 8px 0 0 7px; }
.float-widget-icon { width: 24px; height: 24px; border-radius: 3px; background: linear-gradient(135deg, #f4f6fa 55%, #d5bdf6); display: flex; align-items: center; justify-content: center; }

/* taskbar */
.taskbar { height: 48px; flex-shrink: 0; background: linear-gradient(90deg, #451712, #3e1713 50%, #3b1a14); border-top: 1px solid #55342e; display: flex; align-items: center; color: #fff; font-family: "Noto Sans", sans-serif; font-size: 12px; }
.task-weather { width: 265px; padding-left: 19px; position: relative; display: flex; }
.weather-badge { position: absolute; left: 31px; top: -4px; width: 16px; height: 16px; border-radius: 50%; background: #f8a0a8; color: #300; font-size: 11px; display: flex; align-items: center; justify-content: center; }
.task-slot { width: 44px; height: 40px; flex-shrink: 0; display: flex; align-items: center; justify-content: center; position: relative; }
.task-search { width: 220px; height: 32px; margin: 0 2px 0 3px; background: #5f3b35; border-radius: 16px; display: flex; align-items: center; padding-left: 12px; gap: 9px; font-size: 13px; position: relative; color: #eee; }
.task-search span { margin-top: -2px; }
.search-tiger { position: absolute; right: 7px; bottom: 1px; }
.task-dot::after { content: ""; position: absolute; left: 50%; bottom: -2px; margin-left: -3px; width: 6px; height: 3px; border-radius: 2px; background: #9d9d9d; }
.task-active { background: rgba(255, 255, 255, .07); border-radius: 4px; }
.task-active::after { content: ""; position: absolute; left: 50%; bottom: -2px; margin-left: -8px; width: 16px; height: 3px; border-radius: 2px; background: #60c8f0; }
.chrome-badge { position: absolute; right: 3px; top: 3px; width: 16px; height: 16px; border-radius: 50%; background: #0b4f96; font-size: 9px; display: flex; align-items: center; justify-content: center; }
.tray { margin-left: auto; display: flex; align-items: center; height: 100%; padding-right: 16px; }
.tray-slot { display: flex; align-items: center; justify-content: center; height: 100%; }
.tray-chevron { width: 32px; }
.tray-sync { width: 32px; }
.tray-cloud { width: 30px; }
.tray-lang { width: 46px; display: flex; flex-direction: column; align-items: center; line-height: 16px; font-size: 11.500px; }
.tray-wifi { width: 27px; }
.tray-mute { width: 24px; }
.tray-battery { width: 27px; }
.tray-clock { width: 73px; display: flex; flex-direction: column; align-items: flex-end; line-height: 16px; font-size: 12px; }
.tray-bell { width: 27px; }
```
